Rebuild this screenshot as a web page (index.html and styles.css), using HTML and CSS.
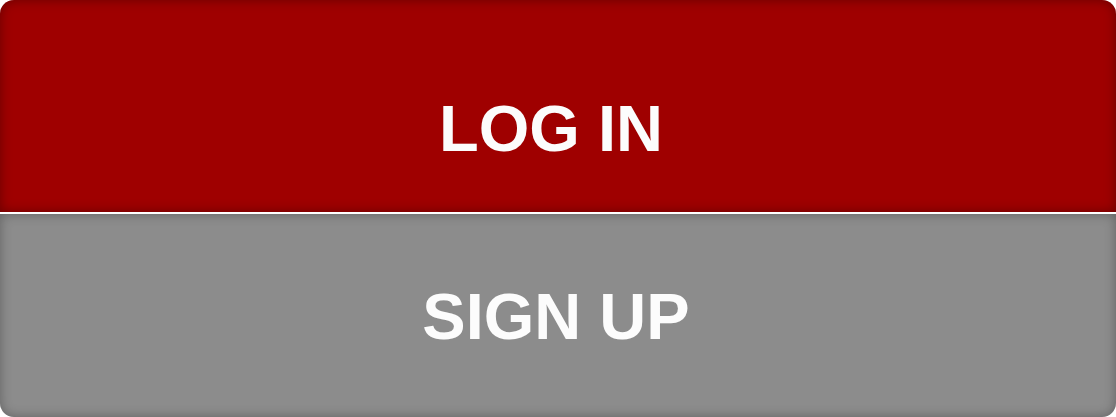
FILE: index.html
```html
<!DOCTYPE html>
<html>
<head>
<meta charset="utf-8">
<link rel="stylesheet" href="styles.css">
</head>
<body>
<div class="panel">
  <button class="btn btn-login">LOG IN</button>
  <button class="btn btn-signup">SIGN UP</button>
</div>
</body>
</html>
```
FILE: styles.css
```css
html, body {
  margin: 0;
  padding: 0;
  background: #ffffff;
}
.panel {
  width: 1116px;
  height: 417px;
  display: flex;
  flex-direction: column;
  gap: 2px;
}
.btn {
  border: none;
  margin: 0;
  display: flex;
  align-items: center;
  justify-content: center;
  font-family: "Liberation Sans", Arial, sans-serif;
  font-weight: bold;
  font-size: 65px;
  line-height: 1;
  color: #fcfcfc;
  width: 100%;
}
.btn-login {
  height: 212px;
  padding: 45px 14px 0 0;
  background: #9f0000;
  border-radius: 14px 14px 0 0;
  box-shadow: inset 0 0 12px rgba(0,0,0,0.35);
}
.btn-signup {
  height: 203px;
  padding: 2px 4px 0 0;
  background: #8c8c8c;
  border-radius: 0 0 14px 14px;
  box-shadow: inset 0 0 12px rgba(0,0,0,0.3);
}
```
